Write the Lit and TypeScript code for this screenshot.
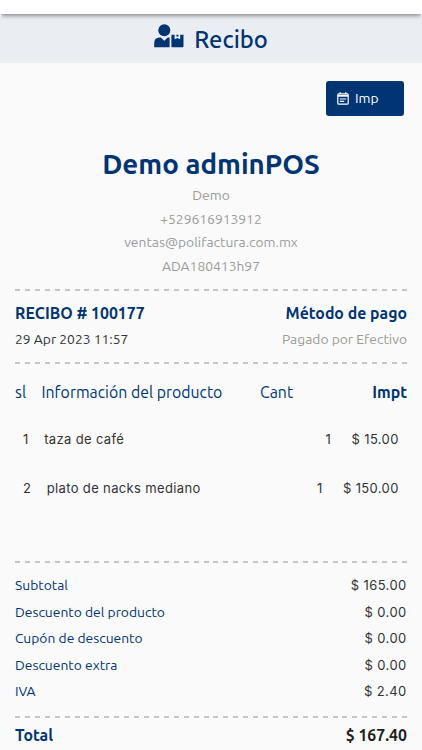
import { LitElement, html, css } from 'lit';

const items = [
  { n: 1, name: 'taza de café', qty: 1, price: '$ 15.00' },
  { n: 2, name: 'plato de nacks mediano', qty: 1, price: '$ 150.00' },
];

const totals = [
  { label: 'Subtotal', value: '$ 165.00' },
  { label: 'Descuento del producto', value: '$ 0.00' },
  { label: 'Cupón de descuento', value: '$ 0.00' },
  { label: 'Descuento extra', value: '$ 0.00' },
  { label: 'IVA', value: '$ 2.40' },
];

class DashedRule extends LitElement {
  static styles = css`
    :host {
      display: block;
      height: 2px;
      background: repeating-linear-gradient(90deg, #c6c6c6 0 5px, transparent 5px 9.923px);
    }
  `;
  render() {
    return html``;
  }
}
customElements.define('dashed-rule', DashedRule);

class AppRoot extends LitElement {
  static styles = css`
    :host {
      display: block;
      height: 750px;
      overflow: hidden;
      background: #fafafa;
      color: #003473;
      font-family: Ubuntu, 'Noto Sans', sans-serif;
      font-size: 13.85px;
      white-space: nowrap;
    }
    .status {
      height: 14px;
      background: #fff;
      position: relative;
      box-shadow: 0 1px 5px rgba(0, 0, 0, 0.55);
      clip-path: inset(0 0 -12px 0);
      margin: 0 1px;
    }
    .top { background: #fff; }
    .bar {
      height: 49px;
      background: #eaedf2;
      display: flex;
      justify-content: center;
      align-items: center;
    }
    .bar svg { width: 30px; height: 24px; margin: -6px 10px 0 0; }
    .title { font-size: 23.7px; font-weight: 500; line-height: 30px; }
    .actions { display: flex; justify-content: flex-end; padding: 18px 18px 0 0; }
    .print {
      box-sizing: border-box;
      width: 78px;
      height: 35px;
      border-radius: 3px;
      background: #003473;
      color: #fff;
      display: flex;
      align-items: center;
      padding: 0 0 1px 11px;
      gap: 6px;
    }
    .print svg { width: 12px; height: 13px; }
    .shop { text-align: center; padding-top: 30px; }
    .name { font-size: 27.7px; font-weight: 700; line-height: 36px; }
    .contact { color: #9b9b9b; line-height: 23.6px; margin-top: 2px; height: 94.5px; }
    .body { padding: 0 15px; }
    .r1 { margin-top: 10px; }
    .pair { display: flex; justify-content: space-between; line-height: 26px; }
    .meta { padding: 9.5px 0 10.5px; height: 51px; }
    .meta .pair + .pair { line-height: 27.6px; }
    .strong { font-size: 15.85px; font-weight: 700; }
    .date { color: #333; }
    .paid { color: #9b9b9b; }
    .thead {
      display: grid;
      grid-template-columns: 26.5px 218.5px 1fr auto;
      font-size: 15.85px;
      line-height: 24px;
      margin-top: 16.5px;
      margin-bottom: 10px;
    }
    .impt { font-weight: 700; }
    .item {
      height: 49px;
      padding: 0 8.3px 0 8px;
      display: flex;
      align-items: center;
      font: 13px/20px Inter, 'Noto Sans', sans-serif;
      letter-spacing: 0.35px;
      color: #333;
    }
    .product { flex: 1; margin-left: 15.5px; }
    .item:nth-of-type(2) .product { margin-left: 15px; }
    .qty { margin-right: 20.5px; }
    .r3 { margin-top: 48.5px; }
    .totals { padding: 9.6px 0 11.9px; }
    .totals .pair { line-height: 26.5px; }
    .amount { font-family: Inter, 'Noto Sans', sans-serif; font-size: 13px; letter-spacing: 0.4px; color: #333; margin-right: 0.4px; }
    .grand { padding-top: 4px; }
    .sum { color: #1f1f1f; }
  `;

  render() {
    return html`
      <div class="top"><div class="status"></div></div>
      <div class="bar">
        <svg viewBox="0 0 30 24" fill="#003473">
          <circle cx="10.3" cy="6.3" r="6" />
          <path d="M0.2 23.2V19.2Q0.2 13.7 5.4 13.5H6.8L10.3 16.8L13.7 13.5H15.6V23.2Z" />
          <path d="M17.4 10.7H20.6V15.3L23.3 14.1L26.2 15.3V10.7H29.5V22.3Q29.5 23.2 28.6 23.2H18.2Q17.4 23.2 17.4 22.3ZM22.4 10.7H24.5V12.6H22.4Z" />
        </svg>
        <span class="title">Recibo</span>
      </div>
      <div class="actions">
        <div class="print">
          <svg viewBox="0 0 12 13" fill="none" stroke="#fff">
            <rect x="0.8" y="1.9" width="10.4" height="10.3" rx="0.9" stroke-width="1.2" />
            <path d="M3.2 0.3V2M8.8 0.3V2" stroke-width="1.3" />
            <path d="M1 3.8H11" stroke-width="1.8" />
            <path d="M2.8 7H9.2M2.8 9.4H7.2" stroke-width="1.2" />
          </svg>
          <span>Imp</span>
        </div>
      </div>
      <div class="shop">
        <div class="name">Demo adminPOS</div>
        <div class="contact">
          <div>Demo</div>
          <div>+529616913912</div>
          <div>ventas@polifactura.com.mx</div>
          <div>ADA180413h97</div>
        </div>
      </div>
      <div class="body">
        <dashed-rule class="r1"></dashed-rule>
        <div class="meta">
          <div class="pair">
            <span class="strong">RECIBO # 100177</span>
            <span class="strong">Método de pago</span>
          </div>
          <div class="pair">
            <span class="date">29 Apr 2023 11:57</span>
            <span class="paid">Pagado por Efectivo</span>
          </div>
        </div>
        <dashed-rule></dashed-rule>
        <div class="thead">
          <span>sl</span>
          <span>Información del producto</span>
          <span>Cant</span>
          <span class="impt">Impt</span>
        </div>
        ${items.map(
          (i) => html`<div class="item">
            <span>${i.n}</span>
            <span class="product">${i.name}</span>
            <span class="qty">${i.qty}</span>
            <span>${i.price}</span>
          </div>`
        )}
        <dashed-rule class="r3"></dashed-rule>
        <div class="totals">
          ${totals.map(
            (t) => html`<div class="pair"><span>${t.label}</span><span class="amount">${t.value}</span></div>`
          )}
        </div>
        <dashed-rule></dashed-rule>
        <div class="pair grand">
          <span class="strong">Total</span>
          <span class="strong sum">$ 167.40</span>
        </div>
      </div>
    `;
  }
}
customElements.define('app-root', AppRoot);
